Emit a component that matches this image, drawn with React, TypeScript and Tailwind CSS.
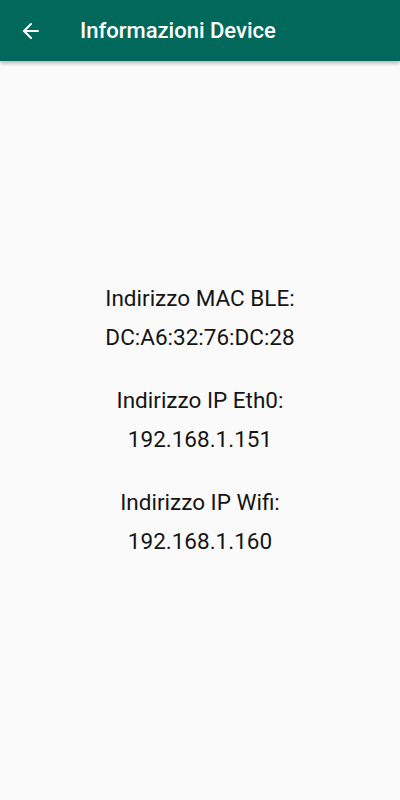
import { ArrowLeft } from "lucide-react";

const rows = [
  { label: "Indirizzo MAC BLE:", value: "DC:A6:32:76:DC:28" },
  { label: "Indirizzo IP Eth0:", value: "192.168.1.151" },
  { label: "Indirizzo IP Wifi:", value: "192.168.1.160" },
];

export default function App() {
  return (
    <div className="w-[400px] h-[800px] bg-[#fafafa] flex flex-col font-['Roboto',sans-serif]">
      <header className="h-[61px] bg-[#00695c] flex items-center shadow-[0_2px_4px_rgba(0,0,0,0.3)] z-10">
        <ArrowLeft className="ml-[19px] text-white" size={24} strokeWidth={2} />
        <h1 className="ml-[37px] text-white text-[22px] font-medium">Informazioni Device</h1>
      </header>
      <main className="flex flex-col items-center pt-[218px] text-[22.5px] text-[#151515]">
        {rows.map((r) => (
          <div key={r.label} className="flex flex-col items-center mb-[24px]">
            <span className="leading-[39px]">{r.label}</span>
            <span className="leading-[39px]">{r.value}</span>
          </div>
        ))}
      </main>
    </div>
  );
}
